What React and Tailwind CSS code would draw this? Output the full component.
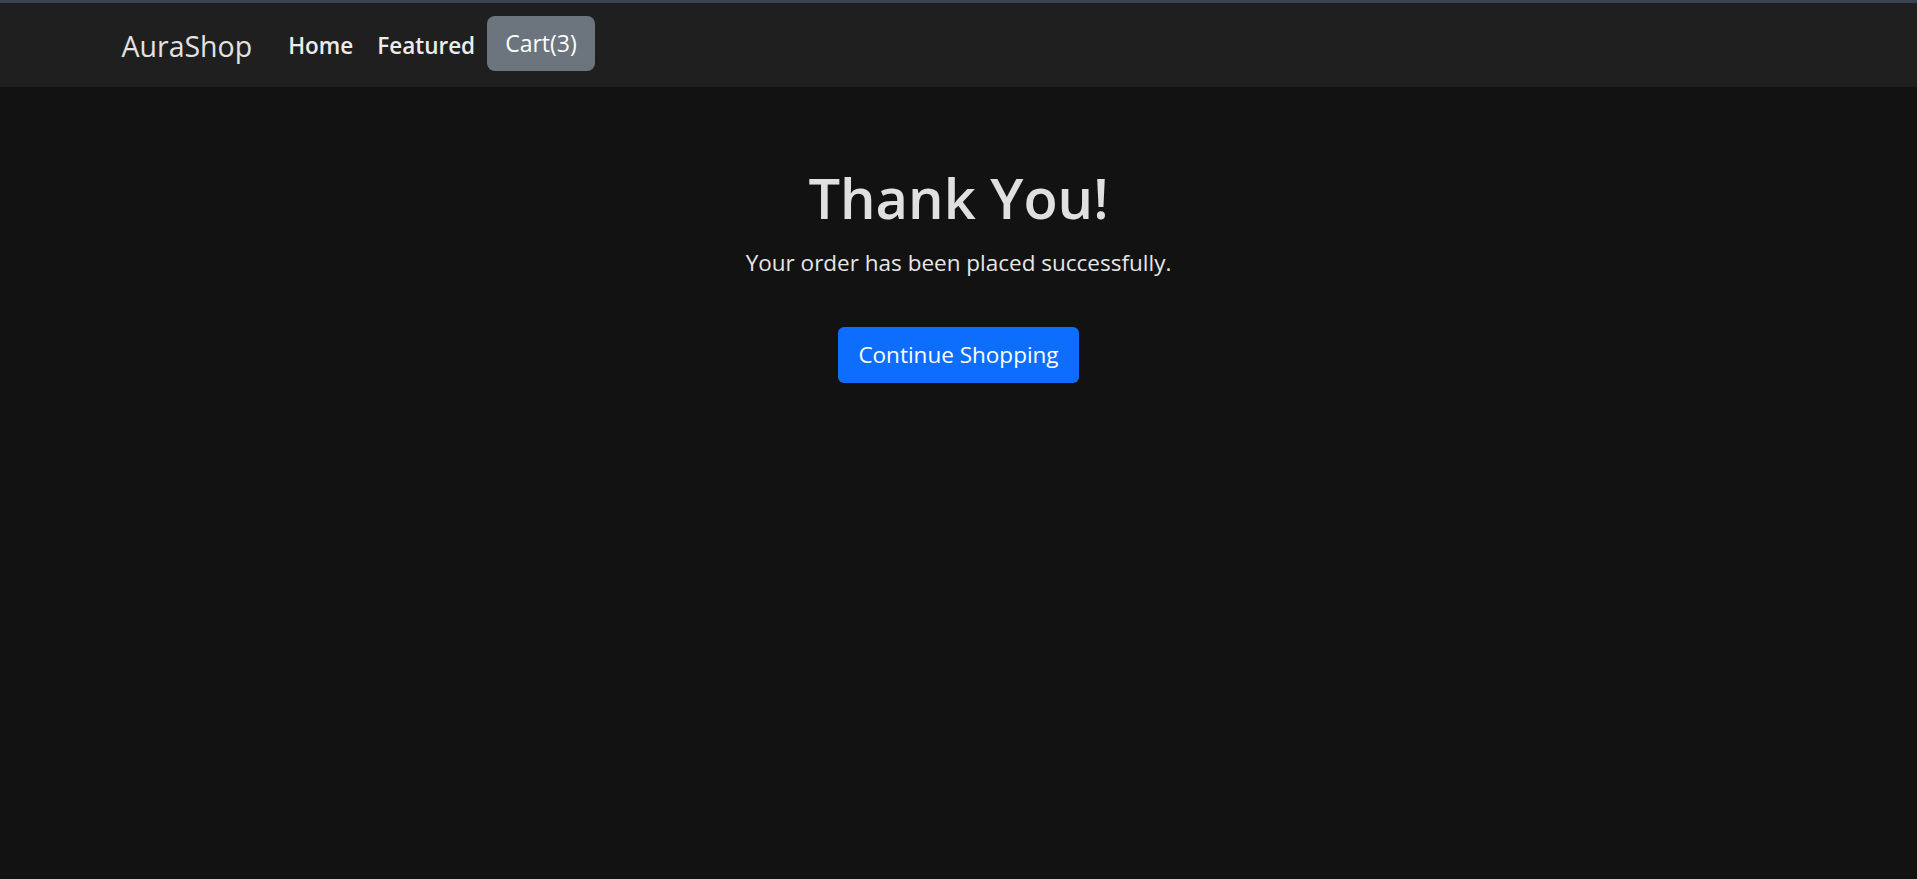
import React from "react";

const Navbar = ({ cartCount }) => {
  return (
    <nav className="h-[87px] bg-[#1f1f1f] border-t-[3px] border-[#3c4350]">
      <div className="mx-auto flex h-full w-[1710px] items-center px-[18px]">
        <a href="#" className="mr-6 pt-[2px] text-[28.5px] leading-[45px] text-[#e2e2e2]">
          AuraShop
        </a>
        <div className="flex items-center pt-[2px]">
          <a href="#" className="px-3 py-3 text-[22.5px] font-semibold leading-[36px] text-[#ececec]">
            Home
          </a>
          <a href="#" className="px-3 py-3 text-[22.5px] font-semibold leading-[36px] text-[#ececec]">
            Featured
          </a>
          <button
            type="button"
            className="-mt-[6px] h-[55px] rounded-[8px] bg-[#6c757d] px-[18px] text-[23px] leading-[36px] text-white"
          >
            Cart({cartCount})
          </button>
        </div>
      </div>
    </nav>
  );
};

export default function App() {
  return (
    <div className="min-h-screen bg-[#121212] font-['Open_Sans',sans-serif] text-[#dee2e6]">
      <Navbar cartCount={3} />
      <main className="mx-auto w-[1710px] px-[18px] pt-[74px] text-center">
        <h1 className="text-[56px] font-semibold leading-[72px] text-[#e0e0e0]">
          Thank You!
        </h1>
        <p className="mt-[12px] text-[22.5px] leading-[36px] text-[#e6e6e6]">
          Your order has been placed successfully.
        </p>
        <button
          type="button"
          className="mt-[46px] h-[56px] rounded-[6px] bg-[#0d6efd] px-[20px] text-[22.5px] leading-[36px] text-white"
        >
          Continue Shopping
        </button>
      </main>
    </div>
  );
}
